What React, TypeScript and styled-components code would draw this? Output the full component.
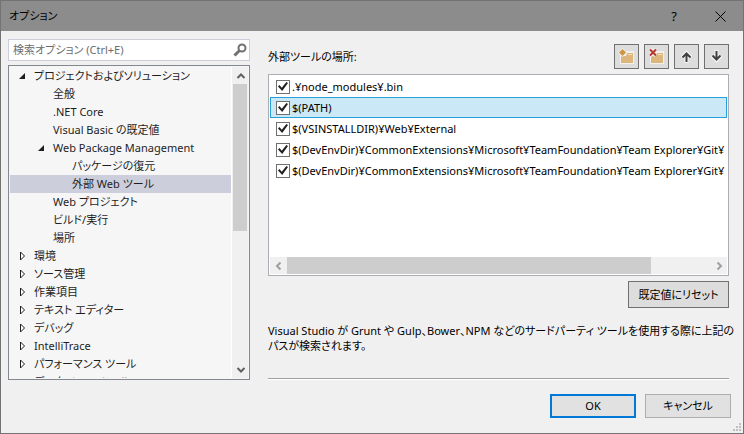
import React from 'react';
import styled, { createGlobalStyle } from 'styled-components';

const GlobalStyle = createGlobalStyle`
  *, *::before, *::after { box-sizing: border-box; }
  body {
    margin: 0;
    color: #1e1e1e;
    font-family: "Noto Sans", "Noto Sans CJK JP", sans-serif;
    font-size: 11px;
    line-height: 18px;
    font-feature-settings: "palt";
  }
  button, input { font: inherit; color: inherit; font-feature-settings: inherit; }
  button { padding: 0; }
  ul { list-style: none; margin: 0; padding: 0; }
`;

const Dialog = styled.div`
  position: relative;
  display: flex;
  flex-direction: column;
  min-height: 100vh;
  background: #f0f0f0;
  border: 1px solid #737373;
`;

const TitleBar = styled.header`
  display: flex;
  align-items: center;
  height: 30px;
  padding-left: 8px;
  background: #8c8c8c;
  color: #000;
`;

const Title = styled.h1`
  flex: 1;
  margin: 0;
  font-size: 11px;
  font-weight: 400;
`;

const CaptionButton = styled.button`
  display: grid;
  place-items: center;
  width: 46px;
  height: 30px;
  border: 0;
  background: none;
  font-size: 13px;
`;

const Body = styled.div`
  flex: 1;
  display: flex;
  gap: 18px;
  padding: 8px 14px 0 7px;
`;

const Side = styled.div`
  flex: none;
  display: flex;
  flex-direction: column;
  gap: 4px;
  width: 242px;
`;

const SearchBox = styled.div`
  display: flex;
  align-items: center;
  height: 22px;
  padding: 0 2px 0 4px;
  background: #fff;
  border: 1px solid #cccedb;
`;

const SearchInput = styled.input`
  flex: 1;
  min-width: 0;
  padding: 0;
  border: 0;
  outline: 0;
  background: none;
  &::placeholder { color: #6d6d6d; opacity: 1; }
`;

const IconButton = styled.button`
  display: grid;
  place-items: center;
  border: 0;
  background: none;
`;

const TreeFrame = styled.div`
  display: flex;
  height: 315px;
  padding: 1px;
  background: #f6f6f6;
  border: 1px solid #828790;
`;

const Tree = styled.ul`
  flex: 1;
  min-width: 0;
  overflow: hidden;
`;

const TreeRow = styled.li<{ $level: number; $selected?: boolean }>`
  display: flex;
  align-items: center;
  height: 18px;
  padding-left: ${p => 6 + p.$level * 19}px;
  white-space: nowrap;
  background: ${p => (p.$selected ? '#cccedb' : 'transparent')};
`;

const Twisty = styled.span`
  display: grid;
  place-items: center;
  width: 12px;
  height: 18px;
  margin-right: 6px;
`;

const VScroll = styled.div`
  flex: none;
  display: flex;
  flex-direction: column;
  width: 17px;
  padding: 0 1px;
  background: #f0f0f0;
  border-left: 1px solid #fff;
`;

const VThumb = styled.div`
  height: 147px;
  background: #cdcdcd;
`;

const ScrollButton = styled(IconButton)`
  width: 17px;
  height: 17px;
  flex: none;
`;

const VScrollButton = styled(ScrollButton)`
  width: 15px;
`;

const Spacer = styled.div`
  flex: 1;
`;

const Main = styled.main`
  flex: 1;
  min-width: 0;
  display: flex;
  flex-direction: column;
  padding-top: 5px;
  color: #000;
`;

const Heading = styled.div`
  display: flex;
  align-items: center;
  justify-content: space-between;
  margin-bottom: 5px;
`;

const Toolbar = styled.div`
  display: flex;
  gap: 5px;
`;

const ToolButton = styled.button`
  display: grid;
  place-items: center;
  width: 25px;
  height: 25px;
  background: #ddd;
  border: 1px solid #707070;
`;

const ListFrame = styled.div`
  display: flex;
  flex-direction: column;
  height: 202px;
  padding: 1px;
  background: #fff;
  border: 1px solid #abadb3;
`;

const List = styled.ul`
  flex: 1;
  overflow: hidden;
`;

const ListRow = styled.li<{ $selected?: boolean }>`
  height: 21px;
  padding: 0 0 0 5px;
  border: 1px solid ${p => (p.$selected ? '#26a0da' : 'transparent')};
  background: ${p => (p.$selected ? '#cbe8f6' : 'transparent')};
`;

const CheckLabel = styled.label`
  display: flex;
  align-items: center;
  gap: 2px;
  height: 19px;
  white-space: nowrap;
`;

const Check = styled.input`
  appearance: none;
  flex: none;
  display: grid;
  place-items: center;
  width: 14px;
  height: 14px;
  margin: 0;
  background: #fff;
  border: 1px solid #707070;
  &:checked::after {
    content: "";
    width: 10px;
    height: 10px;
    background: #212121;
    clip-path: polygon(0 50%, 14% 36%, 38% 62%, 84% 4%, 100% 14%, 42% 96%);
  }
`;

const HScroll = styled.div`
  display: flex;
  height: 17px;
  background: #f0f0f0;
`;

const HTrack = styled.div`
  flex: 1;
`;

const HThumb = styled.div`
  width: 86%;
  height: 17px;
  background: #cdcdcd;
`;

const ResetButton = styled.button`
  align-self: flex-end;
  width: 101px;
  height: 27px;
  margin-top: 5px;
  background: #ddd;
  border: 1px solid #707070;
`;

const Note = styled.p`
  margin: 15px 0 25px;
  line-height: 15px;
  white-space: nowrap;
`;

const Rule = styled.hr`
  width: 100%;
  margin: 0;
  border: 0;
  border-top: 1px solid #a0a0a0;
  border-bottom: 1px solid #fff;
`;

const Footer = styled.footer`
  display: flex;
  justify-content: flex-end;
  gap: 9px;
  padding: 14px 12px 15px;
`;

const DialogButton = styled.button<{ $primary?: boolean }>`
  width: 86px;
  height: 24px;
  color: #000;
  background: #e1e1e1;
  border: ${p => (p.$primary ? '2px solid #0078d7' : '1px solid #adadad')};
`;

const Grip = styled.svg`
  position: absolute;
  right: 2px;
  bottom: 2px;
`;

type Node = { text: string; level: number; state?: 'open' | 'closed'; selected?: boolean };

const nodes: Node[] = [
  { text: 'プロジェクトおよびソリューション', level: 0, state: 'open' },
  { text: '全般', level: 1 },
  { text: '.NET Core', level: 1 },
  { text: 'Visual Basic の既定値', level: 1 },
  { text: 'Web Package Management', level: 1, state: 'open' },
  { text: 'パッケージの復元', level: 2 },
  { text: '外部 Web ツール', level: 2, selected: true },
  { text: 'Web プロジェクト', level: 1 },
  { text: 'ビルド/実行', level: 1 },
  { text: '場所', level: 1 },
  { text: '環境', level: 0, state: 'closed' },
  { text: 'ソース管理', level: 0, state: 'closed' },
  { text: '作業項目', level: 0, state: 'closed' },
  { text: 'テキスト エディター', level: 0, state: 'closed' },
  { text: 'デバッグ', level: 0, state: 'closed' },
  { text: 'IntelliTrace', level: 0, state: 'closed' },
  { text: 'パフォーマンス ツール', level: 0, state: 'closed' },
  { text: 'データベース ツール', level: 0, state: 'closed' },
];

const gitPath = '$(DevEnvDir)¥CommonExtensions¥Microsoft¥TeamFoundation¥Team Explorer¥Git¥';
const paths = ['.¥node_modules¥.bin', '$(PATH)', '$(VSINSTALLDIR)¥Web¥External', gitPath, gitPath];

const chevrons = {
  up: 'M1.5 7 5 3.5 8.5 7',
  down: 'M1.5 3 5 6.5 8.5 3',
  left: 'M6.5 1.5 3 5l3.5 3.5',
  right: 'M3.5 1.5 7 5 3.5 8.5',
};

const Chevron = ({ dir, color }: { dir: keyof typeof chevrons; color: string }) => (
  <svg width="10" height="10" viewBox="0 0 10 10" fill="none" stroke={color} strokeWidth="2">
    <path d={chevrons[dir]} />
  </svg>
);

const Expander = ({ state }: { state?: 'open' | 'closed' }) => (
  <Twisty>
    {state === 'open' && (
      <svg width="8" height="8" viewBox="0 0 8 8"><path d="M7 1v6H1z" fill="#1e1e1e" /></svg>
    )}
    {state === 'closed' && (
      <svg width="8" height="10" viewBox="0 0 8 10"><path d="M2.5 1v8L6.500 5z" fill="#fff" stroke="#1e1e1e" /></svg>
    )}
  </Twisty>
);

const Folder = () => (
  <>
    <path d="M2 7h5l1-4h8v13H2z" fill="#f2f0ec" />
    <path d="M3 8h5l1-3h6v10H3z" fill="#dcb67a" />
    <path d="M10 6h4v1h-4z" fill="#f2dfc0" />
  </>
);

const Arrow = ({ down }: { down?: boolean }) => (
  <svg width="15" height="15" viewBox="0 0 15 15" fill="none">
    <g transform={down ? 'rotate(180 7.500 7.500)' : undefined}>
      <path d="M7.500 14V4M3 8.500l4.500-4.500 4.500 4.500" stroke="#f4f4f4" strokeWidth="4" />
      <path d="M7.500 13V4M3.500 8.500l4-4 4 4" stroke="#424242" strokeWidth="2" />
    </g>
  </svg>
);

export default function App() {
  return (
    <>
      <GlobalStyle />
      <Dialog role="dialog" aria-label="オプション">
        <TitleBar>
          <Title>オプション</Title>
          <CaptionButton aria-label="ヘルプ">?</CaptionButton>
          <CaptionButton aria-label="閉じる">
            <svg width="11" height="11" viewBox="0 0 11 11" stroke="#000"><path d="M.5.5l10 10M10.500.5l-10 10" /></svg>
          </CaptionButton>
        </TitleBar>
        <Body>
          <Side>
            <SearchBox>
              <SearchInput aria-label="検索オプション" placeholder="検索オプション (Ctrl+E)" />
              <IconButton aria-label="検索">
                <svg width="14" height="14" viewBox="0 0 14 14" fill="none" stroke="#717171">
                  <circle cx="9" cy="5" r="3.500" strokeWidth="2" />
                  <path d="M6.500 7.500l-5 5" strokeWidth="3" />
                </svg>
              </IconButton>
            </SearchBox>
            <TreeFrame>
              <Tree role="tree">
                {nodes.map(n => (
                  <TreeRow
                    key={n.text}
                    role="treeitem"
                    aria-level={n.level + 1}
                    aria-expanded={n.state ? n.state === 'open' : undefined}
                    aria-selected={!!n.selected}
                    $level={n.level}
                    $selected={n.selected}
                  >
                    <Expander state={n.state} />
                    {n.text}
                  </TreeRow>
                ))}
              </Tree>
              <VScroll>
                <VScrollButton aria-label="上へスクロール"><Chevron dir="up" color="#606060" /></VScrollButton>
                <VThumb />
                <Spacer />
                <VScrollButton aria-label="下へスクロール"><Chevron dir="down" color="#606060" /></VScrollButton>
              </VScroll>
            </TreeFrame>
          </Side>
          <Main>
            <Heading>
              <span id="paths-label">外部ツールの場所:</span>
              <Toolbar>
                <ToolButton aria-label="追加">
                  <svg width="17" height="17" viewBox="0 0 17 17">
                    <Folder />
                    <path d="M4.500 0 9 4.500 4.500 9 0 4.500z" fill="#f2f0ec" />
                    <path d="M4.500 1 8 4.500 4.500 8 1 4.500z" fill="#cf9544" />
                  </svg>
                </ToolButton>
                <ToolButton aria-label="削除">
                  <svg width="17" height="17" viewBox="0 0 17 17" fill="none">
                    <Folder />
                    <path d="M2 1.500l6 6M8 1.500l-6 6" stroke="#f2f0ec" strokeWidth="4" />
                    <path d="M2 1.500l6 6M8 1.500l-6 6" stroke="#b5382c" strokeWidth="2" />
                  </svg>
                </ToolButton>
                <ToolButton aria-label="上へ"><Arrow /></ToolButton>
                <ToolButton aria-label="下へ"><Arrow down /></ToolButton>
              </Toolbar>
            </Heading>
            <ListFrame>
              <List aria-labelledby="paths-label">
                {paths.map((p, i) => (
                  <ListRow key={i} $selected={i === 1}>
                    <CheckLabel>
                      <Check type="checkbox" defaultChecked />
                      {p}
                    </CheckLabel>
                  </ListRow>
                ))}
              </List>
              <HScroll>
                <ScrollButton aria-label="左へスクロール"><Chevron dir="left" color="#a0a0a0" /></ScrollButton>
                <HTrack><HThumb /></HTrack>
                <ScrollButton aria-label="右へスクロール"><Chevron dir="right" color="#a0a0a0" /></ScrollButton>
              </HScroll>
            </ListFrame>
            <ResetButton>既定値にリセット</ResetButton>
            <Note>
              Visual Studio が Grunt や Gulp、Bower、NPM などのサードパーティ ツールを使用する際に上記の
              <br />
              パスが検索されます。
            </Note>
            <Rule />
          </Main>
        </Body>
        <Footer>
          <DialogButton $primary>OK</DialogButton>
          <DialogButton>キャンセル</DialogButton>
        </Footer>
        <Grip width="8" height="8" viewBox="0 0 8 8" fill="#bfbfbf" aria-hidden="true">
          <path d="M6 0h2v2H6zM3 3h2v2H3zM6 3h2v2H6zM0 6h2v2H0zM3 6h2v2H3zM6 6h2v2H6z" />
        </Grip>
      </Dialog>
    </>
  );
}
